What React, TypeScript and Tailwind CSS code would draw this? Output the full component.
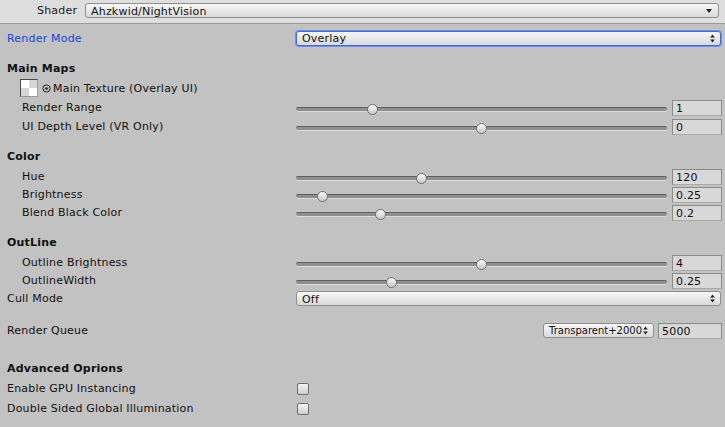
import React from "react";

const FONT = { fontFamily: '"DejaVu Sans", Verdana, sans-serif' };

function UpDown() {
  return (
    <svg width="5" height="9" viewBox="0 0 5 9" className="shrink-0">
      <path d="M2.5 0.5 L4.8 3.5 L0.2 3.5 Z" fill="#222" />
      <path d="M2.5 8.5 L4.8 5.5 L0.2 5.5 Z" fill="#222" />
    </svg>
  );
}

function Dropdown({ text, active = false, className = "" }: { text: string; active?: boolean; className?: string }) {
  return (
    <div
      className={`flex h-[15px] items-center justify-between rounded-[3px] border bg-gradient-to-b from-[#f7f7f7] to-[#d9d9d9] pl-[5px] pr-[5px] leading-none text-[#111] ${
        active ? "border-[#3b6ae8] shadow-[0_0_0_1px_#6d90ee]" : "border-[#8e8e8e]"
      } ${className}`}
    >
      <span className="pt-px">{text}</span>
      <UpDown />
    </div>
  );
}

function NumberField({ value, className = "" }: { value: string; className?: string }) {
  return (
    <div
      className={`flex h-[16px] items-center border border-[#8a8a8a] border-b-[#a9a9a9] bg-[#d8d8d8] pl-[3px] pt-px text-[11px] leading-none text-[#111] ${className}`}
    >
      {value}
    </div>
  );
}

/* thumb = x of the thumb centre in page pixels */
function SliderRow({ label, thumb, value, className = "" }: { label: string; thumb: number; value: string; className?: string }) {
  return (
    <div className={`flex h-[18px] items-center ${className}`}>
      <div className="w-[296px] shrink-0 pl-[22px] pt-[2px]">{label}</div>
      <div className="relative h-full w-[371px] shrink-0">
        <div className="absolute left-0 right-0 top-[9px] h-[4px] rounded-full border-t border-t-[#5f5f5f] bg-[#8f8f8f] shadow-[0_1px_0_#dcdcdc]" />
        <div
          className="absolute top-[6px] h-[11px] w-[11px] rounded-full border border-[#6f6f6f] bg-gradient-to-b from-[#fbfbfb] to-[#c9c9c9]"
          style={{ left: thumb - 296 - 5.5 }}
        />
      </div>
      <NumberField value={value} className="ml-[5px] mt-[2px] w-[50px]" />
    </div>
  );
}

function Heading({ text, className = "" }: { text: string; className?: string }) {
  return <div className={`flex h-[18px] items-center pl-[7px] pt-[2px] font-bold ${className}`}>{text}</div>;
}

function CheckRow({ label, className = "" }: { label: string; className?: string }) {
  return (
    <div className={`flex h-[18px] items-center ${className}`}>
      <div className="w-[297px] shrink-0 pl-[7px] pt-[2px]">{label}</div>
      <div className="mt-px h-[12px] w-[12px] rounded-[2px] border border-[#6e6e6e] bg-gradient-to-b from-[#f4f4f4] to-[#cfcfcf]" />
    </div>
  );
}

export default function App() {
  return (
    <div className="h-[427px] w-[725px] overflow-hidden bg-[#c2c2c2] text-[11px] tracking-[0.2px] text-[#111]" style={FONT}>
      {/* Shader header */}
      <div className="flex h-[24px] items-start border-b border-[#9a9a9a] bg-[#dedede] pt-[3px]">
        <div className="flex h-[15px] w-[85px] shrink-0 items-center pl-[37px] pt-[2px] text-[#1a1a1a]">Shader</div>
        <div className="flex h-[15px] w-[634px] items-center justify-between rounded-[3px] border border-[#8e8e8e] bg-gradient-to-b from-[#f8f8f8] to-[#dadada] pl-[5px] pr-[6px] leading-none">
          <span className="pt-px">Ahzkwid/NightVision</span>
          <svg width="6" height="4" viewBox="0 0 6 4">
            <path d="M0 0 L6 0 L3 4 Z" fill="#222" />
          </svg>
        </div>
      </div>

      <div className="pt-[5px]">
        {/* Render Mode */}
        <div className="flex h-[18px] items-center">
          <div className="w-[296px] shrink-0 pl-[7px] pt-[2px] text-[#1446dc]">Render Mode</div>
          <Dropdown text="Overlay" active className="w-[425px]" />
        </div>

        <Heading text="Main Maps" className="mt-[12px]" />
        <div className="mt-[1px] flex h-[20px] items-center pl-[20px]">
          <div className="grid h-[18px] w-[18px] grid-cols-2 grid-rows-2 border border-[#4a4a4a] border-b-[#9a9a9a] border-r-[#9a9a9a]">
            <div className="bg-white" />
            <div className="bg-[#d6d6d6]" />
            <div className="bg-[#d6d6d6]" />
            <div className="bg-white" />
          </div>
          <svg width="9" height="9" viewBox="0 0 9 9" className="ml-[4px] mt-px">
            <circle cx="4.5" cy="4.5" r="3.6" fill="none" stroke="#222" strokeWidth="1" />
            <circle cx="4.5" cy="4.5" r="1.3" fill="#222" />
          </svg>
          <span className="ml-[2px] pt-[2px]">Main Texture (Overlay UI)</span>
        </div>
        <SliderRow label="Render Range" thumb={372} value="1" />
        <SliderRow label="UI Depth Level (VR Only)" thumb={481} value="0" className="mt-[1px]" />

        <Heading text="Color" className="mt-[12px]" />
        <SliderRow label="Hue" thumb={421} value="120" className="mt-[2px]" />
        <SliderRow label="Brightness" thumb={322} value="0.25" />
        <SliderRow label="Blend Black Color" thumb={380} value="0.2" />

        <Heading text="OutLine" className="mt-[12px]" />
        <SliderRow label="Outline Brightness" thumb={481} value="4" className="mt-[2px]" />
        <SliderRow label="OutlineWidth" thumb={391} value="0.25" />

        <div className="flex h-[18px] items-center">
          <div className="w-[296px] shrink-0 pl-[7px] pt-[2px]">Cull Mode</div>
          <Dropdown text="Off" className="mt-px w-[425px]" />
        </div>

        <div className="mt-[14px] flex h-[18px] items-center">
          <div className="w-[543px] shrink-0 pl-[7px] pt-[2px]">Render Queue</div>
          <Dropdown text="Transparent+2000" className="mt-px w-[111px] pl-[5px] pr-[3px] text-[10px] tracking-normal" />
          <NumberField value="5000" className="ml-[4px] mt-px w-[64px]" />
        </div>

        <Heading text="Advanced Oprions" className="mt-[20px]" />
        <CheckRow label="Enable GPU Instancing" className="mt-[2px]" />
        <CheckRow label="Double Sided Global Illumination" className="mt-[2px]" />
      </div>
    </div>
  );
}
